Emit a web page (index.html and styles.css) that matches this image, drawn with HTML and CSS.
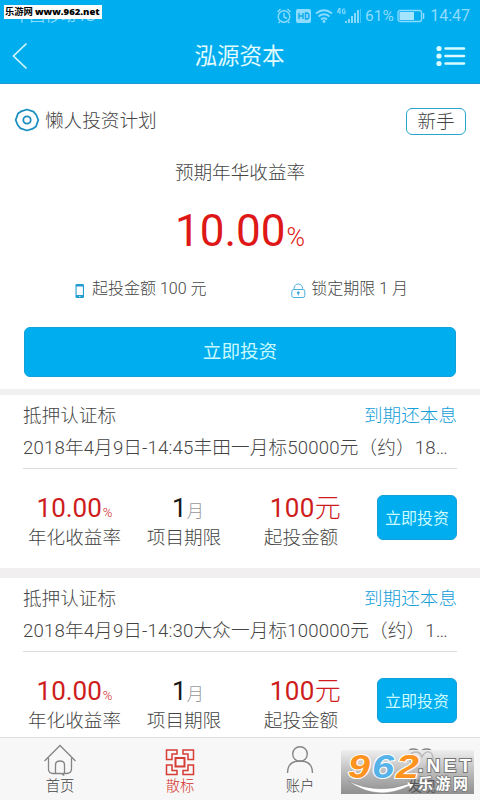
FILE: index.html
```html
<!DOCTYPE html>
<html lang="zh-CN">
<head>
<meta charset="utf-8">
<title>泓源资本</title>
<link rel="stylesheet" href="styles.css">
</head>
<body>
<div class="app">
  <header class="top">
    <div class="status">
      <span class="carrier">中国移动4G</span>
      <svg class="status-icons" width="86" height="20" viewBox="0 0 86 20" fill="none" stroke="#8cdcff" stroke-width="1.4">
        <circle cx="8" cy="10.5" r="5.8"/><path d="M8 7v4l3 1.5M1.5 6l3-3M14.5 6l-3-3M4 15.500l-1.500 1.500M12 15.500l1.500 1.500"/>
        <rect x="20" y="3" width="15" height="14" rx="2" fill="#8cdcff" stroke="none"/>
        <path d="M23 7v6M27 7v6M23 10h4M29.500 7v6h1q2.500 0 2.500-3t-2.500-3z" stroke="#10a8e8"/>
        <path d="M40 7.500q8-6.500 16 0M42.500 10.500q5.500-4.500 11 0M45 13.500q3-2.500 6 0" stroke-width="1.800"/><circle cx="48" cy="15.500" r="1.400" fill="#8cdcff" stroke="none"/>
        <path d="M63.500 2l-2 4h3M64 2v6M69 3.200q-2.500-1-2.500 2t2.500 2V5h-1" stroke-width="1.100"/>
        <path d="M70 17v-2M73 17v-4M76 17v-7M79 17V7M82 17V4" stroke-width="1.900"/><path d="M84.500 3v14" stroke-width=".5"/>
      </svg>
      <span class="percent">61%</span>
      <svg class="battery" width="28" height="14" viewBox="0 0 28 14"><rect x="1" y="1.500" width="23.500" height="11" rx="2" fill="none" stroke="#8cdcff" stroke-width="1.300"/><rect x="2.500" y="3" width="14.500" height="8" fill="#a5e4ff"/><path d="M26.500 4v6" stroke="#8cdcff" stroke-width="1.500"/></svg>
      <span class="clock">14:47</span>
    </div>
    <div class="nav">
      <svg width="16" height="28" viewBox="0 0 16 28" fill="none" stroke="#d3f6ff" stroke-width="1.700"><path d="M14.500 1.500L1.500 14L14.500 26.500"/></svg>
      <h1>泓源资本</h1>
      <svg width="30" height="22" viewBox="0 0 30 22" fill="#d9fbff" stroke="#d9fbff" stroke-width="2.500" stroke-linecap="round"><g stroke="none"><circle cx="3" cy="3.500" r="2.600"/><circle cx="3" cy="11" r="2.600"/><circle cx="3" cy="18.500" r="2.600"/></g><path d="M9.500 3.500h18.500M9.500 11h18.500M9.500 18.500h18.500"/></svg>
    </div>
  </header>

  <section class="hero">
    <div class="plan">
      <svg width="26" height="24" viewBox="0 0 26 24" fill="none" stroke="#188fc0" stroke-width="1.800"><path d="M13 1.500L19.500 3.700L22.300 7L24.300 12L22 18.500L19 20.600L13 22.500L6.500 20.300L3.700 17L1.700 12L4 5.500L7 3.400Z" stroke-linejoin="round"/><circle cx="13" cy="12" r="3.700"/></svg>
      <span>懒人投资计划</span>
      <span class="badge">新手</span>
    </div>
    <p class="rate-label">预期年华收益率</p>
    <p class="big-rate">10.00<small>%</small></p>
    <div class="facts">
      <div><svg width="10" height="16" viewBox="0 0 10 16"><rect x=".5" y="1" width="8.500" height="14" rx="1.300" fill="#209bd2"/><path d="M1.600 3.500h6.300v8.500H1.600z" fill="#fff"/><circle cx="4.800" cy="13.600" r=".7" fill="#fff"/></svg><span>起投金额 100 元</span></div>
      <div><svg width="15" height="16" viewBox="0 0 15 16" fill="none" stroke="#49aee0"><rect x=".8" y="6.500" width="13" height="8" rx="2"/><path d="M3 6.500V5.500a4.300 4.500 0 0 1 8.600 0v1"/><circle cx="7.300" cy="9.700" r="1" fill="#168bc4"/><path d="M7.300 9.500v3"/></svg><span>锁定期限 1 月</span></div>
    </div>
    <div class="invest-wide">立即投资</div>
  </section>

  <main>
    <article>
      <div class="line"><span>抵押认证标</span><span class="repay">到期还本息</span></div>
      <h2>2018年4月9日-14:45丰田一月标50000元（约）18…</h2>
      <div class="figures">
        <div class="stat rate"><b>10.00<small>%</small></b><span>年化收益率</span></div>
        <div class="stat term"><b>1<i>月</i></b><span>项目期限</span></div>
        <div class="stat amount"><b>100<em>元</em></b><span>起投金额</span></div>
        <div class="invest">立即投资</div>
      </div>
    </article>
    <article>
      <div class="line"><span>抵押认证标</span><span class="repay">到期还本息</span></div>
      <h2>2018年4月9日-14:30大众一月标100000元（约）1…</h2>
      <div class="figures">
        <div class="stat rate"><b>10.00<small>%</small></b><span>年化收益率</span></div>
        <div class="stat term"><b>1<i>月</i></b><span>项目期限</span></div>
        <div class="stat amount"><b>100<em>元</em></b><span>起投金额</span></div>
        <div class="invest">立即投资</div>
      </div>
    </article>
  </main>

  <nav class="tabs">
    <div><svg width="34" height="32" viewBox="0 0 34 32" fill="none" stroke="#858585" stroke-width="1.300"><path d="M1.500 17L17 1.500L32.500 17M5.500 14v11q0 4.500 4.500 4.500h8l2.500 1.500-.5-1.500h3.500q5 0 5-5V14M12.500 29v-8q0-4 4.500-4t4.500 4v8"/></svg><span>首页</span></div>
    <div class="active"><svg width="30" height="32" viewBox="0 0 30 32" fill="none" stroke="#d63d36" stroke-width="1.500"><path d="M1.500 6h10.500v4H7v5.500H1.500zM28.500 6H18v4h5v5.500h5.500zM1.500 30.500h10.500v-4H7V21H1.500zM28.500 30.500H18v-4h5V21h5.500z"/><path d="M10.500 14h9v8.500h-9z" stroke-width="2"/></svg><span>散标</span></div>
    <div><svg width="30" height="32" viewBox="0 0 30 32" fill="none" stroke="#858585" stroke-width="1.400"><circle cx="15" cy="10" r="7.300"/><path d="M2.500 29q0-12 12.500-12t12.500 12"/></svg><span>账户</span></div>
    <div><svg width="30" height="32" viewBox="0 0 30 32" fill="none" stroke="#858585" stroke-width="1.400"><path d="M15 28L4 16Q1 5 8 5q5 0 7 4q2-4 7-4q7 0 4 11z"/></svg><span>发现</span></div>
  </nav>

  <div class="site-tag"><span>乐游网</span> <b>www.962.net</b></div>
  <div class="site-logo">
    <svg width="133" height="44" viewBox="0 0 133 44">
      <defs><linearGradient id="shade" x2="0" y2="1"><stop stop-color="#eee"/><stop offset=".5" stop-color="#b8b8b8"/><stop offset="1" stop-color="#888"/></linearGradient></defs>
      <path d="M0 0h133v44H0z" fill="url(#shade)" opacity=".94"/>
      <path d="M70 14q-4-12 5-12 4 0 6 5 3-6 7-5 6 2 3 13" fill="none" stroke="#999" stroke-width="1.300" opacity=".6"/>
      <path d="M7 31Q36 45 67 34l-2-2 9 1-5 6-1-3Q36 52 7 31z" fill="#fff" stroke="#888" stroke-width=".5"/>
      <g class="mark"><text x="7" y="28" textLength="22" lengthAdjust="spacingAndGlyphs" fill="#ff9320">9</text><text x="31" y="28" textLength="22" lengthAdjust="spacingAndGlyphs" fill="#55b3ea">6</text><text x="55" y="28" textLength="23" lengthAdjust="spacingAndGlyphs" fill="#ff9320">2</text></g>
      <text class="net" x="77" y="22" textLength="53" lengthAdjust="spacing">.NET</text>
      <text class="found" x="67" y="41">发现</text>
      <text class="brand" x="77" y="39" textLength="50">乐游网</text>
    </svg>
  </div>
</div>
</body>
</html>
```
FILE: styles.css
```css
* { box-sizing: border-box; }
body, h1, h2, p { margin: 0; font-weight: 300; }
body { font-family: Roboto, "Noto Sans CJK SC", sans-serif; font-size: 18.6px; font-weight: 300; line-height: 28px; color: #444; background: #fff; }
svg { display: block; flex: none; }
.app { position: relative; width: 480px; height: 800px; overflow: hidden; display: flex; flex-direction: column; }

.top { height: 84px; background: #00adef; border-bottom: 1px solid #219bcd; flex: none; }
.status { height: 30px; display: flex; align-items: center; padding: 1px 10px 0 14px; color: #8cdcff; font-size: 16px; font-weight: 400; line-height: 20px; }
.carrier { width: 262px; font-size: 15.5px; }
.status-icons { margin-right: 3px; }
.percent { width: 32px; font-size: 15.5px; }
.battery { margin-right: 4px; }
.clock { margin-left: auto; }
.nav { display: flex; align-items: center; justify-content: space-between; height: 52px; padding: 0 14px 0 12px; }
.nav h1 { font-size: 22.5px; line-height: 30px; font-weight: 400; color: #e1fbff; padding-left: 15px; }

.hero { height: 305px; flex: none; padding: 21px 14px 0; text-align: center; }
.plan { display: flex; align-items: center; height: 30px; }
.plan span { margin: 2px 0 0 5px; }
.plan .badge { margin-left: auto; margin-top: 3px; width: 60px; height: 27px; line-height: 26px; border: 1px solid #29a5c9; border-radius: 6px; }
.rate-label { margin-top: 24px; }
.big-rate { height: 60px; margin-top: 14px; line-height: 60px; font-size: 44px; font-weight: 400; color: #de1717; }
.big-rate small { font-size: 25px; font-weight: 300; margin-left: 1px; }
.facts { display: flex; justify-content: space-between; margin-top: 15px; padding: 0 58px 0 61px; font-size: 16px; line-height: 26px; }
.facts div { display: flex; align-items: center; gap: 5px; }
.facts svg { margin-top: 4px; }
.facts div:first-child { gap: 7px; }
.invest-wide { margin: 25px 10px 0; height: 50px; line-height: 48px; border-radius: 6px; border: 1px solid #159fd7; background: #00adef; color: #c8faff; font-weight: 400; }

main { background: #f2eff0; padding-top: 6px; display: flex; flex-direction: column; gap: 9.5px; height: 348px; flex: none; overflow: hidden; }
article { height: 173px; flex: none; padding: 7px 23px 0; background: #fff; }
.line { display: flex; justify-content: space-between; }
.repay { color: #159ed8; }
h2 { height: 39px; line-height: 37px; font-size: 18.6px; letter-spacing: .16px; white-space: nowrap; border-bottom: 1px solid #dcdcdc; }
.figures { display: flex; align-items: flex-start; padding-top: 22px; }
.stat { display: flex; flex-direction: column; align-items: center; }
.stat b { height: 33px; font-size: 26px; line-height: 34px; font-weight: 400; color: #ce1c1c; white-space: nowrap; }
.stat small { font-size: 13px; font-weight: 300; margin-left: 1px; }
.stat i { font-style: normal; font-weight: 300; font-size: 17.5px; color: #999; }
.stat em { font-style: normal; font-weight: 300; }
.rate { width: 93px; margin-left: 5px; }
.term { width: 76px; margin-left: 25px; }
.term b { color: #181818; padding-left: 8px; }
.amount { width: 76px; margin-left: 41px; }
.amount b { padding-left: 9px; letter-spacing: .4px; }
.invest { width: 80px; height: 45px; margin: 4px 0 0 auto; border-radius: 6px; border: 1px solid #159fd7; background: #00adef; text-align: center; line-height: 46px; font-size: 16px; font-weight: 400; color: #c8faff; }

.tabs { height: 63px; flex: none; display: flex; background: #f7f7f7; border-top: 1px solid #dedede; }
.tabs div { width: 120px; display: flex; flex-direction: column; align-items: center; padding-top: 6px; font-size: 14.3px; line-height: 20px; font-weight: 300; color: #444; }
.tabs .active { color: #d6322c; }

.site-tag { position: absolute; left: 4px; top: 5px; width: 98px; height: 14px; padding-left: 1px; background: #fff; color: #000; line-height: 14px; font-size: 9.3px; font-weight: 700; white-space: nowrap; display: flex; gap: 2px; }
.site-tag b { font-family: "Open Sans", sans-serif; font-size: 9.5px; }
.site-logo { position: absolute; left: 341px; top: 750px; }
.site-logo svg { overflow: visible; }
.mark { font: italic 700 34px "Liberation Sans", sans-serif; stroke: #fff; stroke-width: 2px; paint-order: stroke; }
.net { font: 700 19px "Liberation Sans", sans-serif; fill: #fff; stroke: #777; stroke-width: 2px; paint-order: stroke; }
.brand { font: 700 15px "Noto Sans CJK SC", sans-serif; fill: #fff; stroke: #777; stroke-width: 1.5px; paint-order: stroke; }
.found { font: 400 14px "Noto Sans CJK SC", sans-serif; fill: #555; }
```
